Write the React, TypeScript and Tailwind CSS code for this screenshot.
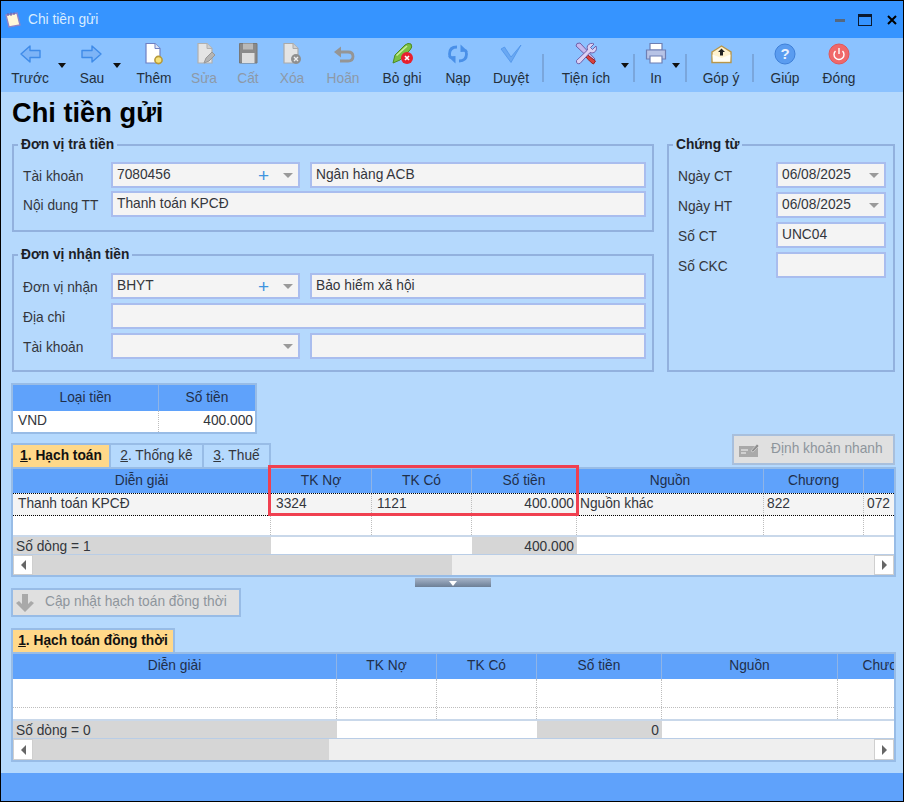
import React from "react";

const FONT = "font-['Liberation_Sans',Arial,sans-serif]";

const Tri = ({ className = "" }: { className?: string }) => (
  <span className={`block w-0 h-0 border-l-[4px] border-r-[4px] border-t-[5px] border-l-transparent border-r-transparent ${className}`} />
);

const reloadArm = (
  <>
    <path d="M11 5 Q3.5 5 3.5 12 Q3.5 14.5 5 16" fill="none" stroke="#4a90e8" strokeWidth="2.8" />
    <path d="M2 14.5 L9.5 14 L9.5 21.5 Z" fill="#4a90e8" />
  </>
);

const icons: Record<string, React.ReactNode> = {
  back: <path d="M3 12 L12 4 V8.5 H22 V15.5 H12 V20 Z" fill="#7db4f7" stroke="#3f8be8" strokeWidth="1.4" strokeLinejoin="round" />,
  next: <path d="M21 12 L12 4 V8.5 H2 V15.5 H12 V20 Z" fill="#7db4f7" stroke="#3f8be8" strokeWidth="1.4" strokeLinejoin="round" />,
  add: <>
    <path d="M4 1.5 H13 L18 6.5 V21 H4 Z" fill="#fff" stroke="#6f80c4" strokeWidth="1.2" />
    <path d="M13 1.5 V6.5 H18" fill="#dfe6f5" stroke="#6f80c4" />
    <circle cx="16.5" cy="18" r="3.6" fill="#f7e27a" stroke="#b79a3a" strokeWidth="1.6" />
  </>,
  edit: <>
    <path d="M6 1.5 H15 L20 6.5 V21 H6 Z" fill="#e4e4e4" stroke="#b0b0b0" strokeWidth="1.2" />
    <path d="M15 1.5 V6.5 H20" fill="#cfcfcf" stroke="#b0b0b0" />
    <path d="M12 21 L14 16 L20 10 L23 13 L17 19 Z" fill="#b5b5b5" stroke="#979797" />
  </>,
  save: <>
    <path d="M3.5 1.5 H21 V21 H3.5 Z" fill="#8a8a8a" stroke="#787878" />
    <path d="M7 1.5 H17 V7.5 H7 Z" fill="#b9b9b9" />
    <path d="M6 11 H18.5 V21 H6 Z" fill="#dedede" />
  </>,
  del: <>
    <path d="M4 1.5 H13 L18 6.5 V21 H4 Z" fill="#e4e4e4" stroke="#aaaaaa" strokeWidth="1.2" />
    <path d="M13 1.5 V6.5 H18" fill="#cfcfcf" stroke="#aaaaaa" />
    <circle cx="16" cy="17" r="5" fill="#8f8f8f" />
    <path d="M14 15 L18 19 M18 15 L14 19" stroke="#eee" strokeWidth="1.4" />
  </>,
  undo: <>
    <path d="M3 10 L10 4.5 V15.5 Z" fill="#959595" />
    <path d="M8 10 H17 Q22 10 22 14.5 Q22 19 17 19 H9" fill="none" stroke="#959595" strokeWidth="2.8" />
  </>,
  skip: <>
    <path d="M3 21 L5 13 L15 3 Q18 0.5 21 2 Q23 5 20 8 L10 18 Z" fill="#7ac143" stroke="#4e8a22" />
    <path d="M6.5 13.5 L17 4" stroke="#c9ec9f" strokeWidth="1.6" />
    <circle cx="17" cy="16" r="6" fill="#e8202e" />
    <path d="M15 14 L19 18 M19 14 L15 18" stroke="#fff" strokeWidth="1.6" />
  </>,
  reload: <>
    {reloadArm}
    <g transform="rotate(180 12 12)">{reloadArm}</g>
  </>,
  check: <path d="M2 7 L5.5 5 L12 15 L22 3 L12 20.5 Z" fill="#6aa8f2" stroke="#4a90e8" strokeWidth="0.7" strokeLinejoin="round" />,
  tools: <>
    <path d="M3 1.5 L6 1 L21 17 L19 20 L2 4 Z" fill="#c6b8ee" stroke="#6f5fa8" />
    <path d="M13 12.5 L21.5 19 L19.5 22 Q17 21 12 15 Z" fill="#d8413f" stroke="#94201f" />
    <path d="M2.5 18.5 L13.5 8 Q12 3 16.5 1.5 Q18.5 1 20 2 L16.5 5.5 L18.5 7.5 L22 4 Q23.5 8.5 20 10.5 Q18 11.5 16 10.5 L6 21.5 Q2 22.5 2.5 18.5 Z" fill="#dcd1f4" stroke="#6f5fa8" />
  </>,
  print: <>
    <path d="M6 1.5 H18 V8 H6 Z" fill="#fff" stroke="#6e7fb3" strokeWidth="1.2" />
    <path d="M2.5 8 H21.5 V17 H2.5 Z" fill="#b7c3e6" stroke="#6e7fb3" strokeWidth="1.2" />
    <path d="M6 14 H18 V21 H6 Z" fill="#fff" stroke="#6e7fb3" strokeWidth="1.2" />
  </>,
  mail: <>
    <path d="M3 10 L12.5 4 L22 10 V20.5 H3 Z" fill="#fff2cf" stroke="#b8964a" strokeWidth="1.4" />
    <path d="M4 19.5 L3.5 12.5 L12.5 16 L21.5 12.5 L21 19.5 Z" fill="#fffdf5" />
    <path d="M12.5 6.5 L16 10 H14 V13.5 H11 V10 H9 Z" fill="#222" />
  </>,
  help: <>
    <circle cx="12" cy="12" r="10" fill="#5a9cf0" stroke="#3f80d8" />
    <text x="12" y="17" textAnchor="middle" fontSize="15" fontWeight="700" fill="#e8f2ff" fontFamily="Liberation Sans">?</text>
  </>,
  close: <>
    <circle cx="12" cy="12" r="10" fill="#f0686a" stroke="#e25658" />
    <path d="M8.5 9 A5 5 0 1 0 15.5 9" fill="none" stroke="#fff" strokeWidth="1.4" />
    <path d="M12 6 V12" stroke="#fff" strokeWidth="1.4" />
  </>,
};

type Tool = { key: string; label: string; w: string; off?: boolean; tri?: string };

const ToolBtn = ({ t }: { t: Tool }) => (
  <div className={`relative flex flex-col items-center shrink-0 ${t.w}`}>
    <svg viewBox="0 0 24 24" className="w-[24px] h-[24px] shrink-0">{icons[t.key]}</svg>
    <span className={`mt-[4px] text-[13.75px] leading-[17px] whitespace-nowrap ${t.off ? "text-[#8d99a8]" : "text-[#24303c]"}`}>{t.label}</span>
    {t.tri && <Tri className={`absolute top-[21px] border-t-[#111] ${t.tri}`} />}
  </div>
);

const Sep = ({ w }: { w: string }) => (
  <div className={`flex justify-center shrink-0 ${w}`}>
    <div className="w-[2px] h-[28px] mt-[12px] bg-[#7aa6dc]" />
  </div>
);

const Field = ({ children, className = "", caret = false, plus = false }: { children?: React.ReactNode; className?: string; caret?: boolean; plus?: boolean }) => (
  <div className={`h-[26px] border-2 border-[#a9bdee] bg-[#f4f4f4] flex items-center pl-[4px] text-[13.75px] text-[#33363c] whitespace-nowrap ${className}`}>
    <span className="flex-1">{children}</span>
    {plus && <span className="text-[#3f94e0] text-[19px] leading-none mr-[14px] font-light">+</span>}
    {caret && <Tri className="border-t-[#9a9a9a] mr-[5px] border-l-[5px] border-r-[5px]" />}
  </div>
);

const Label = ({ children, w = "w-[97px]" }: { children: React.ReactNode; w?: string }) => (
  <div className={`${w} shrink-0 text-[13.75px] text-[#33363c] pt-[5px] pl-[9px] whitespace-nowrap`}>{children}</div>
);

const Group = ({ title, className, children }: { title: string; className: string; children: React.ReactNode }) => (
  <fieldset className={`border-2 border-[#92b1de] ${className}`}>
    <legend className="ml-[4px] px-[3px] text-[13.75px] leading-[14px] font-bold text-[#1c2026] whitespace-nowrap">{title}</legend>
    {children}
  </fieldset>
);

const Hd = ({ children, line = true }: { children?: React.ReactNode; line?: boolean }) => (
  <div className={`flex items-center justify-center overflow-hidden whitespace-nowrap text-[13.75px] text-[#1f2f4a] ${line ? "border-r border-[#8fb4e6]" : ""}`}>{children}</div>
);

const Cell = ({ children, right = false, last = false, tight = false }: { children?: React.ReactNode; right?: boolean; last?: boolean; tight?: boolean }) => (
  <div className={`flex items-center overflow-hidden whitespace-nowrap ${tight ? "pl-[3px]" : "pl-[5px]"} ${right ? "pr-[2px]" : "pr-[3px]"} text-[13.75px] text-[#33363c] ${right ? "justify-end" : ""} ${last ? "" : "border-r border-dotted border-[#bdbdbd]"}`}>{children}</div>
);

const Sc = ({ thumb, h }: { thumb: string; h: string }) => (
  <div className={`${h} flex bg-[#efefef] border-t border-[#b9cde6]`}>
    <div className="w-[20px] h-full bg-white border border-[#cfcfcf] flex items-center justify-center shrink-0">
      <span className="block w-0 h-0 border-t-[5px] border-b-[5px] border-r-[5px] border-t-transparent border-b-transparent border-r-[#666]" />
    </div>
    <div className={`${thumb} h-full bg-[#d6d6d6] shrink-0`} />
    <div className="flex-1" />
    <div className="w-[20px] h-full bg-white border border-[#cfcfcf] flex items-center justify-center shrink-0">
      <span className="block w-0 h-0 border-t-[5px] border-b-[5px] border-l-[5px] border-t-transparent border-b-transparent border-l-[#666]" />
    </div>
  </div>
);

const G1 = "grid grid-cols-[258px_101px_100px_105px_187px_100px_32px] overflow-hidden";
const G2 = "grid grid-cols-[324px_100px_100px_125px_176px_100px] overflow-hidden";

const U = ({ children }: { children: React.ReactNode }) => <span className="underline">{children}</span>;

const tools1: (Tool | { sep: string })[] = [
  { key: "back", label: "Trước", w: "w-[60px]", tri: "left-[58px]" },
  { key: "next", label: "Sau", w: "w-[64px]", tri: "left-[53px]" },
  { key: "add", label: "Thêm", w: "w-[60px]" },
  { key: "edit", label: "Sửa", w: "w-[40px]", off: true },
  { key: "save", label: "Cất", w: "w-[48px]", off: true },
  { key: "del", label: "Xóa", w: "w-[40px]", off: true },
  { key: "undo", label: "Hoãn", w: "w-[62px]", off: true },
  { key: "skip", label: "Bỏ ghi", w: "w-[56px]" },
  { key: "reload", label: "Nạp", w: "w-[56px]" },
  { key: "check", label: "Duyệt", w: "w-[50px]" },
  { sep: "w-[14px]" },
  { key: "tools", label: "Tiện ích", w: "w-[72px]", tri: "left-[71px]" },
  { sep: "w-[24px]" },
  { key: "print", label: "In", w: "w-[20px]", tri: "left-[26px]" },
  { sep: "w-[40px]" },
  { key: "mail", label: "Góp ý", w: "w-[30px]" },
  { sep: "w-[34px]" },
  { key: "help", label: "Giúp", w: "w-[30px]" },
  { key: "close", label: "Đóng", w: "w-[78px]" },
];

export default function App() {
  return (
    <div className={`w-[904px] h-[802px] overflow-hidden flex flex-col border border-black bg-[#b5d9fd] ${FONT}`}>
      {/* title bar */}
      <div className="h-[37px] shrink-0 bg-[#3694ff] flex items-center pl-[3px] pr-[6px]">
        <svg viewBox="0 0 18 18" className="w-[18px] h-[18px] mr-[6px]">
          <path d="M2 4 L13 2 L16 14 L5 16 Z" fill="#fff8d8" stroke="#8d83c9" strokeWidth="1.4" />
          <path d="M4 2 V5 M7 1.5 V5 M10 1.5 V4" stroke="#6a5d9f" strokeWidth="1" />
        </svg>
        <span className="text-[13.75px] text-[#d9ecff] flex-1 mt-[1px]">Chi tiền gửi</span>
        <div className="w-[10px] h-[3px] bg-[#56687f] mr-[13px] mt-[2px]" />
        <div className="w-[14px] h-[12px] border border-t-[3px] border-[#0b1a30] mr-[15px]" />
        <svg viewBox="0 0 10 10" className="w-[10px] h-[10px]">
          <path d="M1 1 L9 9 M9 1 L1 9" stroke="#000" strokeWidth="2" />
        </svg>
      </div>
      {/* toolbar */}
      <div className="h-[54px] shrink-0 bg-[#8bc2ff] flex -ml-[1px] pt-[4px]">
        {tools1.map((t, i) =>
          "sep" in t ? <Sep key={i} w={t.sep} /> : <ToolBtn key={i} t={t} />
        )}
      </div>
      {/* body */}
      <div className="flex-1 min-h-0 flex flex-col pl-[10px] pr-[8px]">
        <h1 className="text-[27.25px] leading-[31px] font-bold text-black pl-[1px] mt-[5px] shrink-0">Chi tiền gửi</h1>
        <div className="flex gap-[13px] mt-[10px] pl-[1px] h-[234px] shrink-0">
          <div className="w-[642px] flex flex-col gap-[16px]">
            <Group title="Đơn vị trả tiền" className="h-[94px] pr-[6px] pt-[10px]">
              <div className="flex">
                <Label>Tài khoản</Label>
                <Field className="w-[189px] shrink-0" plus caret>7080456</Field>
                <Field className="flex-1 ml-[10px]">Ngân hàng ACB</Field>
              </div>
              <div className="flex mt-[3px]">
                <Label>Nội dung TT</Label>
                <Field className="flex-1">Thanh toán KPCĐ</Field>
              </div>
            </Group>
            <Group title="Đơn vị nhận tiền" className="flex-1 pr-[6px] pt-[11px]">
              <div className="flex">
                <Label>Đơn vị nhận</Label>
                <Field className="w-[189px] shrink-0" plus caret>BHYT</Field>
                <Field className="flex-1 ml-[10px]">Bảo hiểm xã hội</Field>
              </div>
              <div className="flex mt-[4px]">
                <Label>Địa chỉ</Label>
                <Field className="flex-1" />
              </div>
              <div className="flex mt-[4px]">
                <Label>Tài khoản</Label>
                <Field className="w-[189px] shrink-0" caret />
                <Field className="flex-1 ml-[10px]" />
              </div>
            </Group>
          </div>
          <Group title="Chứng từ" className="w-[228px] pt-[10px] pr-[7px]">
            <div className="flex flex-col gap-[4px]">
              {[
                ["Ngày CT", "06/08/2025", true],
                ["Ngày HT", "06/08/2025", true],
                ["Số CT", "UNC04", false],
                ["Số CKC", "", false],
              ].map(([l, v, c]) => (
                <div className="flex" key={l as string}>
                  <Label w="w-[107px]">{l as string}</Label>
                  <Field className="flex-1" caret={c as boolean}>{v as string}</Field>
                </div>
              ))}
            </div>
          </Group>
        </div>

        {/* currency table */}
        <div className="w-[246px] h-[51px] mt-[11px] border-2 border-[#98bce6] shrink-0 flex flex-col">
          <div className="h-[26px] bg-[#5fa2fb] grid grid-cols-[146px_1fr]">
            <Hd>Loại tiền</Hd>
            <Hd line={false}>Số tiền</Hd>
          </div>
          <div className="flex-1 bg-white grid grid-cols-[146px_1fr]">
            <Cell>VND</Cell>
            <Cell right last>400.000</Cell>
          </div>
        </div>

        {/* tabs + quick button */}
        <div className="flex items-start justify-between h-[33px] shrink-0">
          <div className="flex mt-[9px] h-[25px] border-2 border-b-0 border-[#98bce6] bg-[#98bce6] gap-[2px] text-[13.75px]">
            <div className="w-[96px] bg-[#ffd889] flex items-center justify-center font-bold text-[#111]"><span><U>1</U>. Hạch toán</span></div>
            <div className="w-[91px] bg-[#b5d9fd] flex items-center justify-center text-[#33363c]"><span><U>2</U>. Thống kê</span></div>
            <div className="w-[65px] bg-[#b5d9fd] flex items-center justify-center text-[#33363c]"><span><U>3</U>. Thuế</span></div>
          </div>
          <div className="w-[163px] h-[31px] bg-[#e0e0e0] border-2 border-[#a8bfdc] flex items-center text-[13.75px] text-[#8e959c] pl-[4px] gap-[11px]">
            <svg viewBox="0 0 22 16" className="w-[22px] h-[16px]">
              <path d="M1 4 H20 V15 H1 Z" fill="#a9a9a9" />
              <path d="M3 8 H10 M3 11 H8" stroke="#ddd" strokeWidth="1.4" />
              <path d="M13 9 L19 2 L21 4 L15 10 Z" fill="#8f8f8f" stroke="#e0e0e0" strokeWidth="0.6" />
            </svg>
            Định khoản nhanh
          </div>
        </div>

        {/* grid 1 */}
        <div className="relative border-2 border-[#98bce6] bg-white w-[885px] shrink-0">
          <div className={`${G1} h-[24px] bg-[#5fa2fb]`}>
            <Hd>Diễn giải</Hd><Hd>TK Nợ</Hd><Hd>TK Có</Hd><Hd>Số tiền</Hd><Hd>Nguồn</Hd><Hd>Chương</Hd><Hd line={false} />
          </div>
          <div className={`${G1} h-[23px] bg-[#f4f4f4] border-y border-dotted border-black`}>
            <Cell>Thanh toán KPCĐ</Cell><Cell>3324</Cell><Cell>1121</Cell><Cell right>400.000</Cell><Cell tight>Nguồn khác</Cell><Cell tight>822</Cell><Cell tight last>072</Cell>
          </div>
          <div className={`${G1} h-[19px]`}>
            <Cell /><Cell /><Cell /><Cell /><Cell /><Cell /><Cell last />
          </div>
          <div className={`${G1} h-[19px] border-t-2 border-[#c9d8ea]`}>
            <div className="bg-[#d6d6d6] flex items-center px-[3px] text-[13.75px] text-[#33363c]">Số dòng = 1</div>
            <div /><div />
            <div className="bg-[#d6d6d6] flex items-center justify-end px-[3px] text-[13.75px] text-[#33363c]">400.000</div>
            <div /><div /><div />
          </div>
          <Sc thumb="w-[419px]" h="h-[21px]" />
          <div className="absolute left-[255px] -top-[4px] w-[311px] h-[51px] border-[3px] border-[#f04050]" />
        </div>

        {/* splitter */}
        <div className="h-[10px] shrink-0 pl-[404px] pt-[1px]">
          <div className="w-[76px] h-[9px] bg-gradient-to-b from-[#a7b5c9] to-[#6d7f96] flex justify-center pt-[3px]">
            <Tri className="border-t-white" />
          </div>
        </div>

        {/* update button */}
        <div className="w-[230px] h-[29px] mt-[1px] shrink-0 bg-[#e0e0e0] border-2 border-[#98bce6] flex items-center text-[13.75px] text-[#8e959c] pl-[2px] gap-[10px]">
          <svg viewBox="0 0 20 20" className="w-[20px] h-[20px]">
            <path d="M10 19 L1 10 L4 8 L7 11 V1 H13 V11 L16 8 L19 10 Z" fill="#a9a9a9" />
          </svg>
          Cập nhật hạch toán đồng thời
        </div>

        {/* tab 2 */}
        <div className="w-[164px] h-[25px] mt-[11px] shrink-0 bg-[#ffd889] border-2 border-b-0 border-[#98bce6] flex items-center justify-center text-[13.75px] font-bold text-[#111]">
          <span><U>1</U>. Hạch toán đồng thời</span>
        </div>

        {/* grid 2 */}
        <div className="border-2 border-[#98bce6] bg-white w-[885px] shrink-0 -mt-[1px]">
          <div className={`${G2} h-[25px] bg-[#5fa2fb]`}>
            <Hd>Diễn giải</Hd><Hd>TK Nợ</Hd><Hd>TK Có</Hd><Hd>Số tiền</Hd><Hd>Nguồn</Hd><Hd line={false}>Chương</Hd>
          </div>
          <div className={`${G2} h-[29px] border-b border-dotted border-[#bdbdbd]`}>
            <Cell /><Cell /><Cell /><Cell /><Cell /><Cell last />
          </div>
          <div className={`${G2} h-[11px]`}>
            <Cell /><Cell /><Cell /><Cell /><Cell /><Cell last />
          </div>
          <div className={`${G2} h-[19px] border-t-2 border-[#c9d8ea]`}>
            <div className="bg-[#d6d6d6] flex items-center px-[3px] text-[13.75px] text-[#33363c]">Số dòng = 0</div>
            <div /><div />
            <div className="bg-[#d6d6d6] flex items-center justify-end px-[3px] text-[13.75px] text-[#33363c]">0</div>
            <div /><div />
          </div>
          <Sc thumb="w-[296px]" h="h-[22px]" />
        </div>
      </div>
      {/* status bar */}
      <div className="h-[28px] shrink-0 bg-[#5fa2fb]" />
    </div>
  );
}
